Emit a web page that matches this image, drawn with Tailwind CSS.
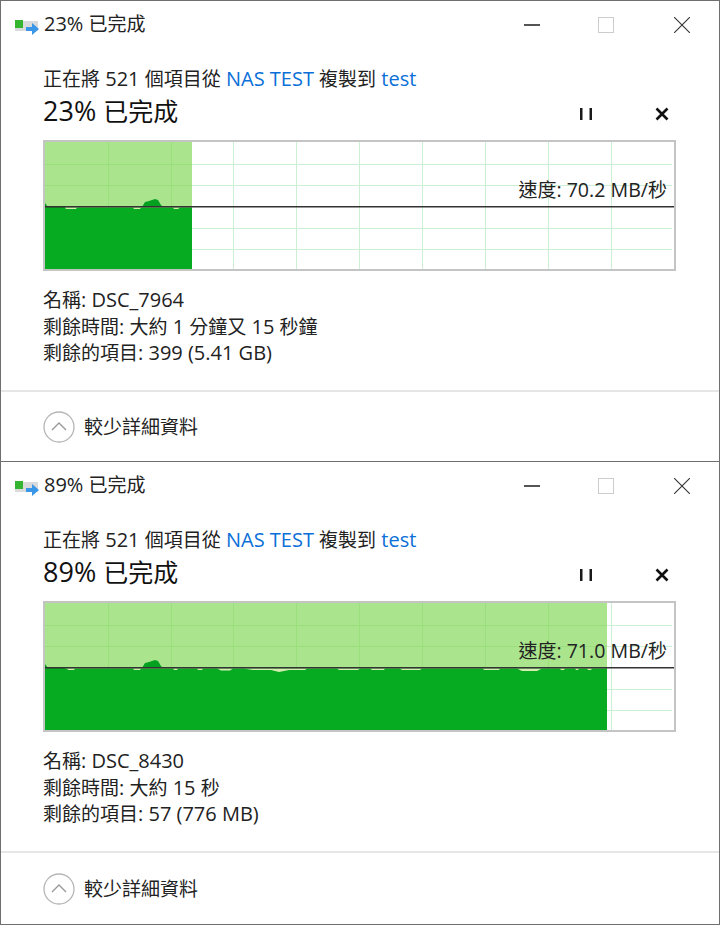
<!DOCTYPE html>
<html lang="zh-Hant">
<head>
    <meta charset="UTF-8">
    <title>複製進度</title>
    <script src="https://cdn.jsdelivr.net/npm/@tailwindcss/browser@4"></script>
</head>
<body class="bg-white text-[#222] font-['Open_Sans','Noto_Sans_CJK_TC',sans-serif] text-[19px] leading-[26px] w-[720px] overflow-hidden">

    <!-- First window -->
    <section class="h-[461px] border-t border-x border-[#6f6f6f] flex flex-col">
        <div class="h-[46px] flex items-center shrink-0">
            <svg class="ml-[13px] mr-[4px] mt-[5px]" width="26" height="20" viewBox="0 0 26 20">
                <rect x="1" y="4" width="23" height="10" fill="#d8dadc"/>
                <rect x="1" y="3" width="8" height="8" fill="#35b52f"/>
                <path d="M12 10h6V6l7 6-7 6v-4h-6z" fill="#3a96e6"/>
            </svg>
            <span class="whitespace-pre"><span class="text-[20px]">23% </span>已完成</span>
            <div class="ml-auto flex items-center mt-[2px]">
                <div class="w-[16px] h-[2px] bg-[#555] mr-[58px]"></div>
                <div class="w-[16px] h-[16px] border border-[#ccc] mr-[60px]"></div>
                <svg class="mr-[29px]" width="16" height="16" viewBox="0 0 16 16"><path d="M0 0L16 16M16 0L0 16" stroke="#333" stroke-width="1.1"/></svg>
            </div>
        </div>
        <div class="px-[42px] pt-[18px] h-[45px] shrink-0 flex items-end">
            <p class="whitespace-pre">正在將<span class="text-[20px]"> 521 </span>個項目從<span class="text-[20px] text-[#0a6fd8]"> NAS TEST </span>複製到<span class="text-[20px] text-[#0a6fd8]"> test</span></p>
        </div>
        <div class="pl-[42px] pr-[50px] h-[38px] shrink-0 flex items-center">
            <p class="text-[25px] text-[#111] whitespace-pre"><span class="text-[27px]">23% </span>已完成</p>
            <svg class="ml-auto mr-[63px] mt-[5px]" width="12" height="12" viewBox="0 0 12 12"><path d="M0 0h2.5v12H0zM9.5 0h2.5v12H9.5z" fill="#1a1a1a"/></svg>
            <svg class="mt-[5px]" width="14" height="14" viewBox="0 0 14 14"><path d="M1.5 1.5L12.5 12.5M12.5 1.5L1.5 12.5" stroke="#111" stroke-width="2.6"/></svg>
        </div>

        <!-- Chart -->
        <div class="relative ml-[42px] mt-[10px] w-[633px] h-[131px] border-2 border-[#c4c4c4] shrink-0">
            <svg class="absolute inset-0" width="629" height="127" viewBox="0 0 629 127">
                <g stroke="#cdf0d5" stroke-width="1">
                    <path d="M188.5 0V127M251.5 0V127M314.5 0V127M377.5 0V127M440.5 0V127M503.5 0V127M566.5 0V127"/>
                    <path d="M147 22.5H627M147 43.5H627M147 86.5H627M147 107.5H627"/>
                </g>
                <rect width="147" height="127" fill="#aae58e"/>
                <path d="M63.5 0V65M126.5 0V65M0 22.5H147M0 43.5H147" stroke="#9ade7e" stroke-width="1"/>
                <rect y="65.5" width="147" height="61.5" fill="#06ab22"/>
                <path d="M20 65.5h12l-1 1.5h-10zM88 65.5h8l-1 1.5h-6zM128 65.5h7l-2 1.5h-4z" fill="#d5edb0"/>
                <path d="M0 65V61L3 65H20V66H0zM97 65L100 60L104 59L110 57L113 58L116 63L118 65z" fill="#04a020"/>
                <rect y="64" width="629" height="1.5" fill="#333"/>
            </svg>
            <span class="absolute right-[7px] top-[35px] whitespace-pre">速度<span class="text-[19.6px]">: 70.2 MB/</span>秒</span>
        </div>

        <div class="px-[42px] pt-[16px] leading-[26.5px]">
            <p class="whitespace-pre">名稱<span class="text-[20px]">: DSC_7964</span></p>
            <p class="whitespace-pre">剩餘時間<span class="text-[20px]">: </span>大約<span class="text-[20px]"> 1 </span>分鐘又<span class="text-[20px]"> 15 </span>秒鐘</p>
            <p class="whitespace-pre">剩餘的項目<span class="text-[20px]">: 399 (5.41 GB)</span></p>
        </div>

        <div class="mt-auto h-[71px] border-t-2 border-[#e6e6e6] flex items-center pl-[42px] shrink-0">
            <svg width="32" height="32" viewBox="0 0 32 32" class="mr-[9px]">
                <circle cx="16" cy="16" r="15" fill="none" stroke="#b5b5b5" stroke-width="1.3"/>
                <path d="M9 19L16 12L23 19" fill="none" stroke="#999" stroke-width="1.4"/>
            </svg>
            <span>較少詳細資料</span>
        </div>
    </section>

    <!-- Second window -->
    <section class="h-[464px] border-y border-x border-[#6f6f6f] flex flex-col">
        <div class="h-[46px] flex items-center shrink-0">
            <svg class="ml-[13px] mr-[4px] mt-[5px]" width="26" height="20" viewBox="0 0 26 20">
                <rect x="1" y="4" width="23" height="10" fill="#d8dadc"/>
                <rect x="1" y="3" width="8" height="8" fill="#35b52f"/>
                <path d="M12 10h6V6l7 6-7 6v-4h-6z" fill="#3a96e6"/>
            </svg>
            <span class="whitespace-pre"><span class="text-[20px]">89% </span>已完成</span>
            <div class="ml-auto flex items-center mt-[2px]">
                <div class="w-[16px] h-[2px] bg-[#555] mr-[58px]"></div>
                <div class="w-[16px] h-[16px] border border-[#ccc] mr-[60px]"></div>
                <svg class="mr-[29px]" width="16" height="16" viewBox="0 0 16 16"><path d="M0 0L16 16M16 0L0 16" stroke="#333" stroke-width="1.1"/></svg>
            </div>
        </div>
        <div class="px-[42px] pt-[18px] h-[45px] shrink-0 flex items-end">
            <p class="whitespace-pre">正在將<span class="text-[20px]"> 521 </span>個項目從<span class="text-[20px] text-[#0a6fd8]"> NAS TEST </span>複製到<span class="text-[20px] text-[#0a6fd8]"> test</span></p>
        </div>
        <div class="pl-[42px] pr-[50px] h-[38px] shrink-0 flex items-center">
            <p class="text-[25px] text-[#111] whitespace-pre"><span class="text-[27px]">89% </span>已完成</p>
            <svg class="ml-auto mr-[63px] mt-[5px]" width="12" height="12" viewBox="0 0 12 12"><path d="M0 0h2.5v12H0zM9.5 0h2.5v12H9.5z" fill="#1a1a1a"/></svg>
            <svg class="mt-[5px]" width="14" height="14" viewBox="0 0 14 14"><path d="M1.5 1.5L12.5 12.5M12.5 1.5L1.5 12.5" stroke="#111" stroke-width="2.6"/></svg>
        </div>

        <!-- Chart -->
        <div class="relative ml-[42px] mt-[10px] w-[633px] h-[131px] border-2 border-[#c4c4c4] shrink-0">
            <svg class="absolute inset-0" width="629" height="127" viewBox="0 0 629 127">
                <g stroke="#cdf0d5" stroke-width="1">
                    <path d="M566.5 0V127"/>
                    <path d="M562 22.5H627M562 43.5H627M562 86.5H627M562 107.5H627"/>
                </g>
                <rect width="562" height="127" fill="#aae58e"/>
                <path d="M63.5 0V65M126.5 0V65M188.5 0V65M251.5 0V65M314.5 0V65M377.5 0V65M440.5 0V65M503.5 0V65M0 22.5H562M0 43.5H562" stroke="#9ade7e" stroke-width="1"/>
                <rect y="65.5" width="562" height="61.5" fill="#06ab22"/>
                <path d="M22 65.5h8l-1 1.5h-6zM88 65.5h8l-1 1.5h-6zM128 65.5h5l-1 1.5h-3zM152 65.5h6l-1 1.5h-4zM172 65.5h16l-3 2h-9zM198 65.5h64l-2 1.5h-16l-10 2-8-2h-18zM292 65.5h23l-2 1.5h-19zM325 65.5h15l-1 1.5h-12zM355 65.5h22l-2 1.5h-18zM438 65.5h17l-1 1.5h-15zM472 65.5h25l-5 2.5h-15zM515 65.5h5l-1 1.5h-3zM530 65.5h4l-1 1.5h-2zM542 65.5h5l-1 1.5h-3z" fill="#d5edb0"/>
                <path d="M0 65V61L3 65H20V66H0zM97 65L100 60L104 59L110 57L113 58L116 63L118 65z" fill="#04a020"/>
                <rect y="64" width="629" height="1.5" fill="#333"/>
            </svg>
            <span class="absolute right-[7px] top-[35px] whitespace-pre">速度<span class="text-[19.6px]">: 71.0 MB/</span>秒</span>
        </div>

        <div class="px-[42px] pt-[16px] leading-[26.5px]">
            <p class="whitespace-pre">名稱<span class="text-[20px]">: DSC_8430</span></p>
            <p class="whitespace-pre">剩餘時間<span class="text-[20px]">: </span>大約<span class="text-[20px]"> 15 </span>秒</p>
            <p class="whitespace-pre">剩餘的項目<span class="text-[20px]">: 57 (776 MB)</span></p>
        </div>

        <div class="mt-auto h-[73px] border-t-2 border-[#e6e6e6] flex items-center pl-[42px] shrink-0">
            <svg width="32" height="32" viewBox="0 0 32 32" class="mr-[9px]">
                <circle cx="16" cy="16" r="15" fill="none" stroke="#b5b5b5" stroke-width="1.3"/>
                <path d="M9 19L16 12L23 19" fill="none" stroke="#999" stroke-width="1.4"/>
            </svg>
            <span>較少詳細資料</span>
        </div>
    </section>
</body>
</html>
